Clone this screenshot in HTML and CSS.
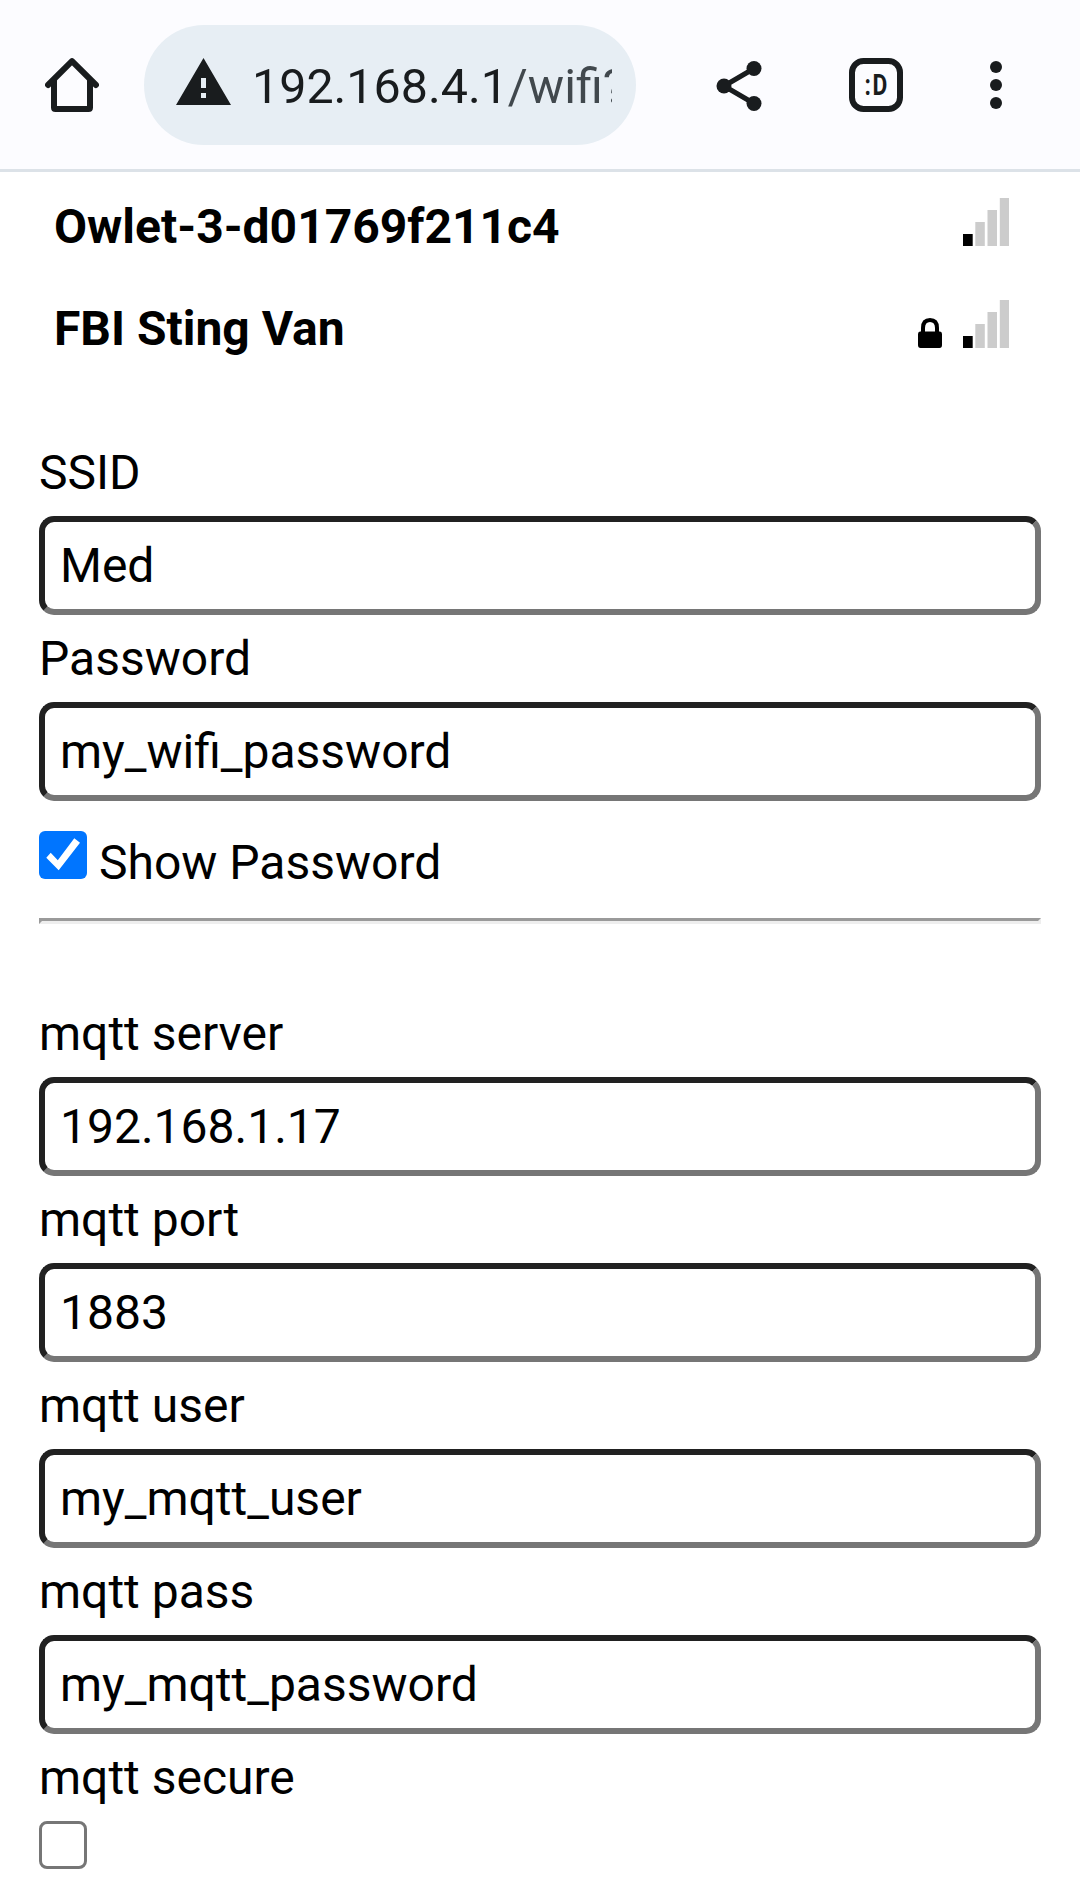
FILE: index.html
```
<!DOCTYPE html>
<html lang="en">
<head>
<meta charset="utf-8">
<title>Config ESP</title>
<link rel="stylesheet" href="styles.css">
</head>
<body>
<header class="toolbar">
  <svg class="icon home" viewBox="0 0 54 54" role="img" aria-label="Home">
    <path d="M9 22V49.500Q9 51 10.500 51H43.500Q45 51 45 49.500V22" fill="none" stroke="currentColor" stroke-width="6"/>
    <path d="M3 27L27 3.200L51 27" fill="none" stroke="currentColor" stroke-width="6" stroke-linecap="round" stroke-linejoin="round"/>
  </svg>
  <div class="address">
    <svg class="warning" viewBox="0 0 55 47" role="img" aria-label="Not secure">
      <path fill="currentColor" fill-rule="evenodd" d="M27.500 0L55 47H0ZM25 20V30H30V20ZM25 35V40H30V35Z"/>
    </svg>
    <div class="url">192.168.4.1<span class="path">/wifi?</span></div>
  </div>
  <svg class="icon share" viewBox="0 0 54 54" role="img" aria-label="Share">
    <path d="M42 10.500L12 28L42 45.500" fill="none" stroke="currentColor" stroke-width="5"/>
    <g fill="currentColor"><circle cx="42" cy="10.500" r="7.500"/><circle cx="12" cy="28" r="7.500"/><circle cx="42" cy="45.500" r="7.500"/></g>
  </svg>
  <svg class="icon tabs" viewBox="0 0 54 54" role="img" aria-label="Tabs">
    <rect x="3" y="3" width="48" height="48" rx="11.500" fill="none" stroke="currentColor" stroke-width="6"/>
    <text class="count" transform="translate(15.500 37) scale(.76 1)">:<tspan x="10.500">D</tspan></text>
  </svg>
  <svg class="icon menu" viewBox="0 0 54 54" role="img" aria-label="Menu">
    <g fill="currentColor"><circle cx="27" cy="9" r="6"/><circle cx="27" cy="27" r="6"/><circle cx="27" cy="45" r="6"/></g>
  </svg>
</header>
<main class="page">
  <ul class="networks">
    <li class="network">
      <span class="name">Owlet-3-d01769f211c4</span>
      <svg class="signal" viewBox="0 0 46 48"><path fill="#000" d="M0 36H9.700V48H0Z"/><path fill="#ccc" d="M12.300 24H21.800V48H12.300ZM24.500 12H34V48H24.500ZM36.800 0H46V48H36.800Z"/></svg>
    </li>
    <li class="network">
      <span class="name">FBI Sting Van</span>
      <svg class="lock" viewBox="0 0 24 30"><path d="M5 16V10Q5 2 12 2T19 10V16" fill="none" stroke="#000" stroke-width="4"/><path d="M2 13.500H22Q24 13.500 24 16V27Q24 30 21.500 30H2.500Q0 30 0 27V16Q0 13.500 2 13.500Z"/></svg>
      <svg class="signal" viewBox="0 0 46 48"><path fill="#000" d="M0 36H9.700V48H0Z"/><path fill="#ccc" d="M12.300 24H21.800V48H12.300ZM24.500 12H34V48H24.500ZM36.800 0H46V48H36.800Z"/></svg>
    </li>
  </ul>
  <form>
    <section class="wifi">
      <label class="label" for="s">SSID</label>
      <input class="field" id="s" type="text" value="Med">
      <label class="label" for="p">Password</label>
      <input class="field" id="p" type="text" value="my_wifi_password">
      <div class="show">
        <input class="check" id="show" type="checkbox" checked>
        <label for="show">Show Password</label>
      </div>
    </section>
    <hr class="rule">
    <section class="mqtt">
      <label class="label" for="server">mqtt server</label>
      <input class="field" id="server" type="text" value="192.168.1.17">
      <label class="label" for="port">mqtt port</label>
      <input class="field" id="port" type="text" value="1883">
      <label class="label" for="user">mqtt user</label>
      <input class="field" id="user" type="text" value="my_mqtt_user">
      <label class="label" for="pass">mqtt pass</label>
      <input class="field" id="pass" type="text" value="my_mqtt_password">
      <label class="label" for="secure">mqtt secure</label>
      <input class="check" id="secure" type="checkbox">
    </section>
  </form>
</main>
</body>
</html>
```
FILE: styles.css
```
* {
  box-sizing: border-box;
}

body {
  margin: 0;
  height: 1883px;
  overflow: hidden;
  background: #fff;
  color: #000;
  font: 48px/56px Roboto, "Liberation Sans", sans-serif;
}

.toolbar {
  display: flex;
  align-items: center;
  height: 172px;
  padding: 1px 57px 0 45px;
  border-bottom: 3px solid #dce2e8;
  background: #fcfcff;
  color: #191c1e;
}

.icon {
  flex: none;
  width: 54px;
  height: 54px;
}

.address {
  display: flex;
  flex: none;
  align-items: center;
  width: 492px;
  height: 120px;
  margin: 0 76px 0 45px;
  padding: 0 24px 0 32px;
  border-radius: 60px;
  background: #e7eef4;
}

.warning {
  flex: none;
  width: 55px;
  height: 47px;
  margin: 0 21px 7px 0;
}

.url {
  flex: 1;
  min-width: 0;
  padding-top: 4px;
  overflow: hidden;
  white-space: nowrap;
  font-size: 48.4px;
}

.path {
  color: #41484d;
}

.tabs {
  margin: 0 66px 0 83px;
}

.count {
  fill: currentColor;
  font-size: 30px;
  font-weight: 700;
}

.page {
  padding: 27px 39px 0;
}

.networks {
  display: flex;
  flex-direction: column;
  gap: 46px;
  margin: 0;
  padding: 0 32px 0 15px;
  list-style: none;
}

.network {
  display: flex;
  align-items: flex-end;
  height: 56px;
}

.name {
  flex: 1;
  font-weight: 700;
}

.signal {
  width: 46px;
  height: 48px;
  margin-bottom: 9px;
}

.lock {
  width: 24px;
  height: 30px;
  margin: 0 21px 9px 0;
}

.wifi {
  padding-top: 88px;
}

.label {
  display: block;
  margin-bottom: 15px;
}

.field {
  display: block;
  width: 100%;
  height: 99px;
  margin: 0 0 16px;
  padding: 0 15px;
  border: 6px solid;
  border-color: #212121 #767676 #767676 #212121;
  border-radius: 15px;
  background: #fff;
  color: #000;
  font: inherit;
}

.show {
  display: flex;
  gap: 12px;
  padding-top: 14px;
}

.show label {
  padding-top: 4px;
}

.check {
  display: block;
  appearance: none;
  flex: none;
  width: 48px;
  height: 48px;
  margin: 0;
  border: 3px solid #767676;
  border-radius: 8px;
}

.check:checked {
  border: 0;
  border-radius: 6px;
  background: #0075ff;
}

.check:checked::after {
  content: "";
  display: block;
  height: 48px;
  background: #fff;
  clip-path: polygon(7.3px 26.7px, 11.7px 21.7px, 18.8px 29.3px, 35.3px 7.3px, 41px 11.7px, 19.7px 39.3px);
}

.rule {
  height: 6px;
  margin: 27px 0 82px;
  border: 3px solid;
  border-color: #9a9a9a #eee #eee #9a9a9a;
}
```
